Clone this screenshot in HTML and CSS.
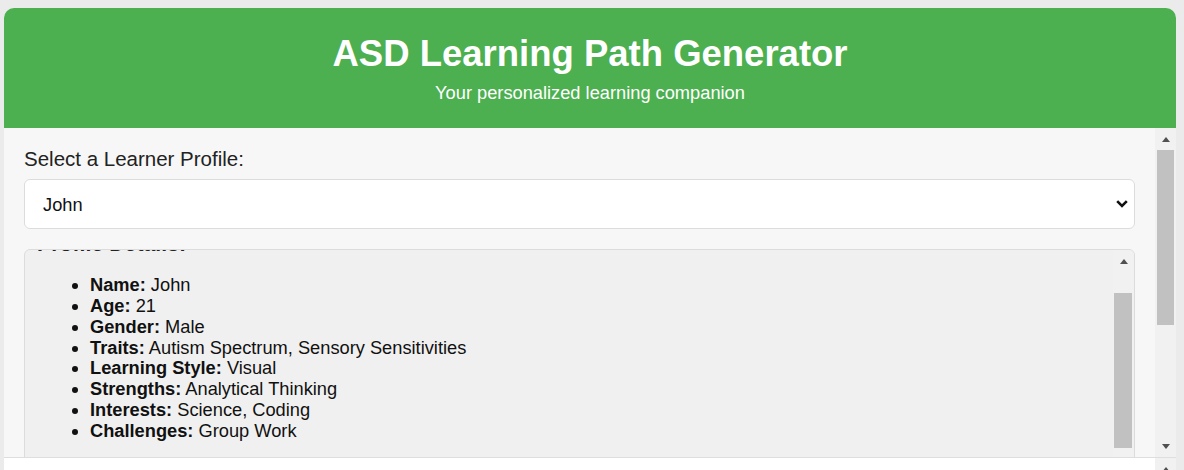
FILE: index.html
```html
<!DOCTYPE html>
<html lang="en">
<head>
<meta charset="utf-8">
<title>ASD Learning Path Generator</title>
<link rel="stylesheet" href="styles.css">
</head>
<body>
<div class="app">
  <header class="app-header">
    <h1 class="app-title">ASD Learning Path Generator</h1>
    <p class="app-subtitle">Your personalized learning companion</p>
  </header>

  <div class="main">
    <main class="main-scroll">
      <label class="field-label" for="profile">Select a Learner Profile:</label>
      <div class="select-wrap">
        <select id="profile" class="select">
          <option>John</option>
          <option>Emma</option>
          <option>Liam</option>
        </select>
        <svg class="select-chevron" width="12" height="8" viewBox="0 0 12 8" aria-hidden="true">
          <path d="M1.2 1.2 L6 6 L10.8 1.2" fill="none" stroke="#111" stroke-width="2.6"/>
        </svg>
      </div>

      <div class="profile-box">
        <section class="profile-content" id="profileContent">
          <h3 class="profile-title">Profile Details:</h3>
          <ul class="profile-list">
            <li><strong>Name:</strong> John</li>
            <li><strong>Age:</strong> 21</li>
            <li><strong>Gender:</strong> Male</li>
            <li><strong>Traits:</strong> Autism Spectrum, Sensory Sensitivities</li>
            <li><strong>Learning Style:</strong> Visual</li>
            <li><strong>Strengths:</strong> Analytical Thinking</li>
            <li><strong>Interests:</strong> Science, Coding</li>
            <li><strong>Challenges:</strong> Group Work</li>
          </ul>
        </section>
        <div class="vscroll" aria-hidden="true">
          <div class="vscroll-btn">
            <svg width="8" height="5" viewBox="0 0 8 5"><path d="M4 0 L8 5 L0 5 Z" fill="#505050"/></svg>
          </div>
          <div class="vscroll-track">
            <div class="vscroll-thumb" style="margin-top:21px;height:155px"></div>
          </div>
          <div class="vscroll-btn">
            <svg width="8" height="5" viewBox="0 0 8 5"><path d="M0 0 L8 0 L4 5 Z" fill="#505050"/></svg>
          </div>
        </div>
      </div>

      <label class="field-label goal-label" for="goal">Select a Learning Goal:</label>
      <div class="select-wrap">
        <select id="goal" class="select">
          <option>Programming Basics</option>
        </select>
      </div>

      <button class="generate-btn" type="button">Generate Learning Path</button>
    </main>
    <div class="vscroll vscroll-main" aria-hidden="true">
      <div class="vscroll-btn">
        <svg width="8" height="5" viewBox="0 0 8 5"><path d="M4 0 L8 5 L0 5 Z" fill="#505050"/></svg>
      </div>
      <div class="vscroll-track">
        <div class="vscroll-thumb" style="margin-top:0;height:175px"></div>
      </div>
      <div class="vscroll-btn">
        <svg width="8" height="5" viewBox="0 0 8 5"><path d="M0 0 L8 0 L4 5 Z" fill="#505050"/></svg>
      </div>
    </div>
  </div>

  <div class="output">
    <section class="output-content">
      <p class="output-text">Your learning path will appear here.</p>
    </section>
    <div class="vscroll vscroll-main" aria-hidden="true">
      <div class="vscroll-btn">
        <svg width="8" height="5" viewBox="0 0 8 5"><path d="M4 0 L8 5 L0 5 Z" fill="#505050"/></svg>
      </div>
      <div class="vscroll-track"></div>
    </div>
  </div>
</div>
<script src="script.js"></script>
</body>
</html>
```

FILE: styles.css
```css
html, body {
  overflow: hidden;
}

body {
  margin: 0;
  padding: 8px 8px 0 4px;
  background: #ebebeb;
  font-family: "Liberation Sans", Arial, sans-serif;
  font-size: 18.25px;
  line-height: normal;
  color: #222;
}

.app {
  width: 1172px;
  border-radius: 10px 10px 0 0;
  overflow: hidden;
  background: #f7f7f7;
}

/* Header */
.app-header {
  background: #4caf50;
  color: #fff;
  text-align: center;
  padding: 25px 20px 24px;
}

.app-title {
  margin: 0 0 7px;
  font-size: 36.5px;
  font-weight: bold;
  line-height: normal;
}

.app-subtitle {
  margin: 0;
  font-size: 18.25px;
}

/* Main scroll area */
.main {
  display: flex;
  height: 330px;
  box-sizing: border-box;
  background: #f7f7f7;
  border-bottom: 1px solid #dedede;
}

.main-scroll {
  flex: 1;
  min-width: 0;
  overflow-y: auto;
  padding: 19px 20px 20px 20px;
}

.field-label {
  display: block;
  font-size: 20.5px;
  margin-bottom: 8px;
  color: #222;
}

.select-wrap {
  position: relative;
}

.select {
  display: block;
  width: 100%;
  height: 50px;
  box-sizing: border-box;
  padding: 0 18px;
  font-family: inherit;
  font-size: 18.25px;
  color: #111;
  background: #fff;
  border: 1px solid #dcdcdc;
  border-radius: 6px;
  appearance: none;
  -webkit-appearance: none;
}

.select-chevron {
  position: absolute;
  right: 7px;
  top: 21px;
}

/* Profile box */
.profile-box {
  display: flex;
  margin-top: 20px;
  height: 222px;
  box-sizing: border-box;
  background: #f0f0f0;
  border: 1px solid #dcdcdc;
  border-radius: 6px;
  overflow: hidden;
}

.profile-content {
  flex: 1;
  min-width: 0;
  overflow-y: auto;
  padding: 11px 12px;
}

.profile-title {
  margin: 0 0 18px;
  font-size: 21.3px;
  line-height: normal;
  color: #222;
}

.profile-list {
  margin: 18px 0 17px;
  padding-left: 53px;
  color: #111;
  line-height: 20.85px;
}

.goal-label {
  margin-top: 20px;
}

.generate-btn {
  display: block;
  margin-top: 20px;
  height: 53px;
  padding: 0 24px;
  font-family: inherit;
  font-size: 18.25px;
  color: #fff;
  background: #4caf50;
  border: none;
  border-radius: 6px;
}

/* Fake scrollbars (the page is photographed with native scrollbars hidden) */
.vscroll {
  flex: 0 0 21px;
  display: flex;
  flex-direction: column;
  background: #f1f1f1;
}

.vscroll-btn {
  flex: 0 0 22px;
  display: flex;
  align-items: center;
  justify-content: center;
}

.vscroll-btn svg {
  display: block;
}

.vscroll-track {
  flex: 1;
  padding: 0 2px 0 1px;
}

.vscroll-main .vscroll-track {
  padding: 0 2px;
}

.vscroll-thumb {
  background: #c1c1c1;
}

/* Output area */
.output {
  display: flex;
  height: 200px;
  background: #fff;
}

.output-content {
  flex: 1;
  min-width: 0;
  overflow-y: auto;
  padding: 20px;
}

.output-text {
  margin: 0;
}
```

FILE: script.js
```js
var content = document.getElementById('profileContent');
content.scrollTop = content.scrollHeight;
```
